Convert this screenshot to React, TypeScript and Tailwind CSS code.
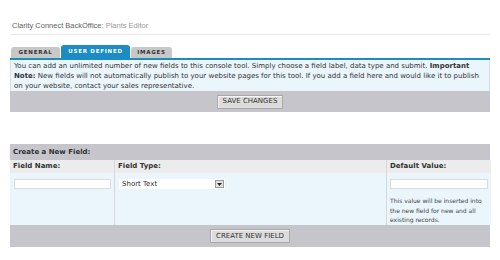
import React from "react";

const font = { fontFamily: '"DejaVu Sans", Verdana, sans-serif' };

function Tab({ label, width, active }: { label: string; width: string; active?: boolean }) {
  return (
    <div
      className={
        active
          ? `flex h-[13px] items-center justify-center rounded-t-[3px] bg-[#1b8cc4] text-[5.5px] font-bold tracking-[0.14em] text-white ${width}`
          : `flex h-[11px] items-center justify-center rounded-t-[3px] bg-[#c8c8c8] text-[5.5px] font-bold tracking-[0.14em] text-[#333] ${width}`
      }
    >
      {label}
    </div>
  );
}

function Btn({ children }: { children: React.ReactNode }) {
  return (
    <button className="h-[14px] border border-[#a9a9a9] bg-[#dcdcdc] px-[5px] text-[7px] leading-none text-[#333] shadow-[inset_1px_1px_0_#f4f4f4]">
      {children}
    </button>
  );
}

export default function App() {
  return (
    <div className="h-[260px] w-[500px] bg-white px-[10px] text-[#333]" style={font}>
      <div
        className="border-b border-[#e8e8e8] pb-[3px] pl-[2px] pt-[21px] text-[7.5px] leading-[10px]"
        style={{ fontFamily: '"Liberation Sans", Arial, sans-serif' }}
      >
        <span className="text-[#5f5f5f]">Clarity Connect BackOffice: </span>
        <span className="text-[#999]">Plants Editor</span>
      </div>

      <div className="mt-[10px] flex items-end gap-[1px] pl-[1px]">
        <Tab label="GENERAL" width="w-[49px]" />
        <Tab label="USER DEFINED" width="w-[69px]" active />
        <Tab label="IMAGES" width="w-[41px]" />
      </div>

      <div className="border-t-2 border-[#1b8cc4]">
        <p className="border-x border-[#d3dde4] bg-[#eaf5fc] px-[3px] pb-0 pt-[1px] text-[7px] leading-[10px]">
          You can add an unlimited number of new fields to this console tool. Simply choose a field label, data type and submit.{" "}
          <b>Important</b> <b>Note:</b> New fields will not automatically publish to your website pages for this tool. If you add a field here and would like it to publish on your website, contact your sales representative.
        </p>
        <div className="flex h-[21px] items-center justify-center bg-[#c5c5cb]">
          <Btn>SAVE CHANGES</Btn>
        </div>
      </div>

      <div className="mt-[32px]">
        <div className="flex h-[16px] items-center bg-[#c5c5cb] px-[3px] text-[7px] font-bold">Create a New Field:</div>
        <div className="grid grid-cols-[105px_272px_1fr] text-[7px]">
          <div className="flex h-[13px] items-center border-r border-[#d8d8d8] bg-[#ececec] px-[3px] font-bold">Field Name:</div>
          <div className="flex h-[13px] items-center border-r border-[#d8d8d8] bg-[#ececec] px-[3px] font-bold">Field Type:</div>
          <div className="flex h-[13px] items-center bg-[#ececec] px-[3px] font-bold">Default Value:</div>

          <div className="h-[52px] border-r border-[#d8d8d8] bg-[#eaf5fc] px-[4px] pt-[6px]">
            <div className="h-[10px] w-[97px] border border-[#dcdcdc] bg-white" />
          </div>
          <div className="h-[52px] border-r border-[#d8d8d8] bg-[#eaf5fc] pl-[4px] pt-[6px]">
            <div className="flex h-[10px] w-[106px] items-center justify-between bg-white pl-[3px] pr-[1px]">
              <span className="text-[7px]">Short Text</span>
              <span className="flex h-[8px] w-[9px] items-center justify-center border border-[#999] bg-[#e2e2e2]">
                <svg width="5" height="3" viewBox="0 0 5 3">
                  <path d="M0 0h5L2.5 3z" fill="#222" />
                </svg>
              </span>
            </div>
          </div>
          <div className="h-[52px] bg-[#eaf5fc] px-[3px] pt-[6px]">
            <div className="h-[10px] w-[98px] border border-[#dcdcdc] bg-white" />
            <p className="mt-[7px] text-[6px] leading-[9.5px] text-[#444]">
              This value will be inserted into the new field for new and all existing records.
            </p>
          </div>
        </div>
        <div className="flex h-[22px] items-center justify-center bg-[#c5c5cb]">
          <Btn>CREATE NEW FIELD</Btn>
        </div>
      </div>
    </div>
  );
}
